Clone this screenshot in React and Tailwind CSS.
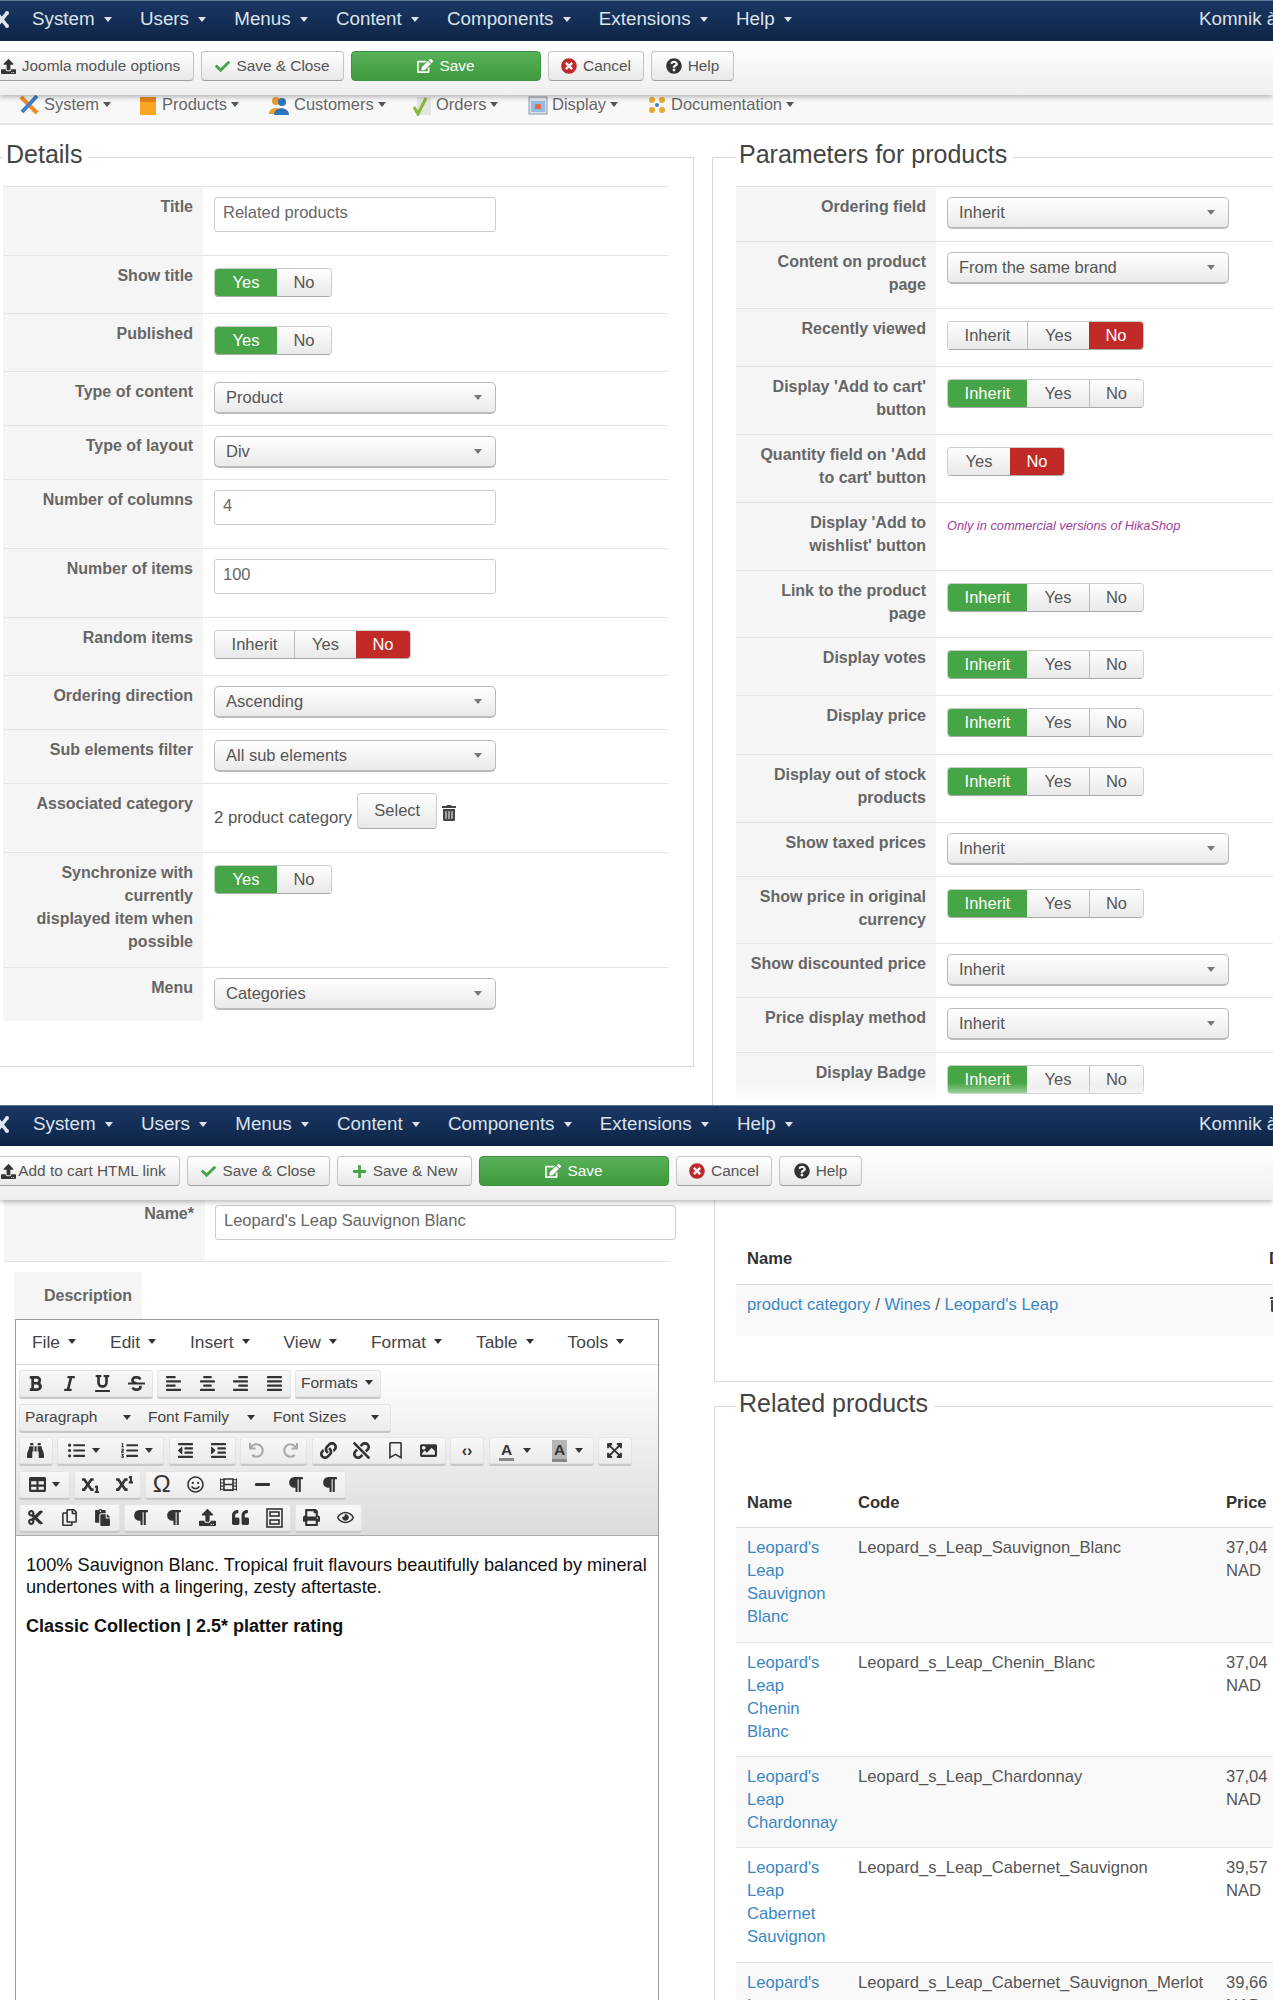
import {
  FaCheck, FaEdit, FaTimesCircle, FaQuestionCircle, FaUpload, FaPlus, FaTrashAlt,
  FaBold, FaItalic, FaUnderline, FaStrikethrough, FaAlignLeft, FaAlignCenter, FaAlignRight, FaAlignJustify,
  FaBinoculars, FaListUl, FaListOl, FaOutdent, FaIndent, FaUndo, FaRedo, FaLink, FaUnlink, FaRegBookmark, FaImage,
  FaExpandArrowsAlt, FaTable, FaSubscript, FaSuperscript, FaRegSmile, FaFilm, FaMinus, FaParagraph,
  FaCut, FaRegCopy, FaPaste, FaQuoteLeft, FaPrint, FaRegEye,
} from "react-icons/fa";

const Caret = ({ tone = "border-t-[#333]" }) => (
  <span className={`inline-block w-0 h-0 border-x-[4px] border-x-transparent border-t-[5px] ${tone}`} />
);

const JoomlaLogo = () => (
  <svg width="10" height="20" viewBox="0 0 10 20" className="shrink-0">
    <path d="M-4 2 L7 16 M7 3 L-4 17" stroke="#dfe6ee" strokeWidth="3.5" fill="none" />
    <circle cx="7" cy="3" r="2" fill="#dfe6ee" />
    <circle cx="7" cy="16" r="2" fill="#dfe6ee" />
  </svg>
);

const menu = ["System", "Users", "Menus", "Content", "Components", "Extensions", "Help"];

// top dark admin bar
const Navbar = ({ left }) => (
  <div className="h-[41px] pb-[3px] flex items-center bg-gradient-to-b from-[#1a3763] to-[#0e2548] border-t border-[#5f7a99] text-[#dce3ec] text-[18.8px]">
    <div className="w-[10px] shrink-0"><JoomlaLogo /></div>
    <div className={`flex gap-[28.3px] ${left}`}>
      {menu.map((m) => (
        <span key={m} className="flex items-center gap-[9px]">
          {m}
          <Caret tone="border-t-[#dce3ec]" />
        </span>
      ))}
    </div>
    <span className="ml-auto whitespace-nowrap w-[74px] shrink-0 overflow-hidden">Komnik à</span>
  </div>
);

const ToolBtn = ({ w, icon, children, green }) => (
  <div
    className={`${w} h-[30px] shrink-0 flex items-center justify-center gap-[6px] rounded-[4px] text-[15.4px] whitespace-nowrap border ${
      green
        ? "bg-gradient-to-b from-[#58b158] to-[#3f9a3f] border-[#3e913e] text-white"
        : "bg-gradient-to-b from-white to-[#e8e8e8] border-[#c4c4c4] border-b-[#9f9f9f] text-[#555]"
    }`}
  >
    {icon}
    {children}
  </div>
);

const Toolbar = ({ children }) => (
  <div className="relative z-10 h-[54px] flex items-center gap-[7px] pb-[4px] bg-gradient-to-b from-white to-[#efefef] shadow-[0_2px_5px_rgba(0,0,0,0.28)]">
    {children}
  </div>
);

const saveIcon = <FaEdit size={16} />;
const checkIcon = <FaCheck size={15} className="text-[#46a546]" />;
const cancelIcon = <FaTimesCircle size={16} className="text-[#c0292b]" />;
const helpIcon = <FaQuestionCircle size={16} className="text-[#333]" />;

// little coloured hikashop menu icons
const SubIcons = {
  System: (
    <svg width="22" height="22" viewBox="0 0 22 22">
      <path d="M3 3 L19 19" stroke="#f08a24" strokeWidth="4" />
      <path d="M19 2 L4 18" stroke="#3f7fc4" strokeWidth="4" />
    </svg>
  ),
  Products: (
    <svg width="20" height="22" viewBox="0 0 20 22">
      <rect x="2" y="3" width="16" height="18" fill="#f9a521" />
      <rect x="2" y="3" width="16" height="5" fill="#e2861a" />
    </svg>
  ),
  Customers: (
    <svg width="22" height="22" viewBox="0 0 22 22">
      <circle cx="8" cy="7" r="4" fill="#ef9b2d" />
      <path d="M1 20 C1 12 14 12 14 20 Z" fill="#ef9b2d" />
      <circle cx="14" cy="8" r="4" fill="#2f73b8" />
      <path d="M6 21 C6 12 21 12 21 21 Z" fill="#2f73b8" />
    </svg>
  ),
  Orders: (
    <svg width="20" height="22" viewBox="0 0 20 22">
      <rect x="5" y="3" width="14" height="18" fill="#e2e4e0" />
      <path d="M2 13 L6 20 L14 4" stroke="#8ab83a" strokeWidth="3" fill="none" />
    </svg>
  ),
  Display: (
    <svg width="20" height="20" viewBox="0 0 20 20">
      <rect x="1" y="2" width="18" height="17" fill="#dfe3e8" stroke="#8f98a3" />
      <rect x="3" y="6" width="14" height="11" fill="#8fbde6" />
      <rect x="7" y="9" width="6" height="5" fill="#e56b4a" />
    </svg>
  ),
  Documentation: (
    <svg width="20" height="20" viewBox="0 0 20 20">
      <circle cx="5" cy="5" r="3" fill="#e8a92e" />
      <circle cx="15" cy="5" r="3" fill="#e8a92e" />
      <circle cx="5" cy="15" r="3" fill="#e8a92e" />
      <circle cx="15" cy="15" r="3" fill="#e8a92e" />
      <circle cx="10" cy="10" r="2" fill="#3f7fc4" />
    </svg>
  ),
};

const subItems = [
  { name: "System", w: "w-[120px]" },
  { name: "Products", w: "w-[130px]" },
  { name: "Customers", w: "w-[144px]" },
  { name: "Orders", w: "w-[116px]" },
  { name: "Display", w: "w-[119px]" },
  { name: "Documentation", w: "w-[200px]" },
];

const SubMenu = () => (
  <div className="h-[30px] pl-[18px] pb-[9px] flex items-center bg-[#f8f8f8] border-b-2 border-[#e2e2e2] text-[16.5px] text-[#666]">
    {subItems.map((s) => (
      <span key={s.name} className={`${s.w} flex items-center gap-[4px] shrink-0`}>
        {SubIcons[s.name]}
        {s.name}
        <Caret tone="border-t-[#555]" />
      </span>
    ))}
  </div>
);

const TextInput = ({ value, w = "w-[282px]" }) => (
  <input
    readOnly
    defaultValue={value}
    className={`${w} h-[35px] px-[8px] pb-[4px] bg-white border border-[#ccc] rounded-[3px] text-[16.5px] text-[#666] outline-none`}
  />
);

const Select = ({ value, w = "w-[282px]" }) => (
  <div className={`${w} h-[32px] pl-[11px] pr-[13px] flex items-center justify-between rounded-[5px] border border-[#bbb] border-b-2 bg-gradient-to-b from-white to-[#eaeaea] text-[16.5px] text-[#555]`}>
    {value}
    <Caret tone="border-t-[#777]" />
  </div>
);

const seg = {
  Inherit: "w-[79px]",
  Yes: "w-[62px]",
  No: "w-[54px]",
};

// Yes/No radio group, active option coloured
const Toggle = ({ items, active }) => (
  <div className="mt-[2px] inline-flex h-[29px] text-[16.5px] rounded-[4px] border border-[#ccc] border-b-[#aaa] overflow-hidden">
    {items.map((o, i) => {
      const on = o === active;
      const tone = on
        ? o === "No"
          ? "bg-[#c12a27] text-white"
          : "bg-[#46a546] text-white"
        : "bg-gradient-to-b from-white to-[#e8e8e8] text-[#555]";
      const edge = i > 0 && !on && items[i - 1] !== active ? "border-l border-[#bbb]" : "";
      return (
        <span key={o} className={`${seg[o]} -my-px flex items-center justify-center ${tone} ${edge}`}>
          {o}
        </span>
      );
    })}
  </div>
);

const yn = ["Yes", "No"];
const iyn = ["Inherit", "Yes", "No"];

const Row = ({ label, h, children }) => (
  <div className={`${h} flex border-t border-[#e4e4e4]`}>
    <div className="w-[200px] shrink-0 bg-[#f5f5f5] pl-[14px] pt-[8px] pr-[10px] text-right font-bold text-[16px] leading-[23px] text-[#666]">
      {label}
    </div>
    <div className="pl-[11px] pt-[10px]">{children}</div>
  </div>
);

const leftRows = [
  { label: "Title", h: "h-[69px]", c: <TextInput value="Related products" /> },
  { label: "Show title", h: "h-[58px]", c: <Toggle items={yn} active="Yes" /> },
  { label: "Published", h: "h-[58px]", c: <Toggle items={yn} active="Yes" /> },
  { label: "Type of content", h: "h-[54px]", c: <Select value="Product" /> },
  { label: "Type of layout", h: "h-[54px]", c: <Select value="Div" /> },
  { label: "Number of columns", h: "h-[69px]", c: <TextInput value="4" /> },
  { label: "Number of items", h: "h-[69px]", c: <TextInput value="100" /> },
  { label: "Random items", h: "h-[58px]", c: <Toggle items={iyn} active="No" /> },
  { label: "Ordering direction", h: "h-[54px]", c: <Select value="Ascending" /> },
  { label: "Sub elements filter", h: "h-[54px]", c: <Select value="All sub elements" /> },
  {
    label: "Associated category",
    h: "h-[69px]",
    c: (
      <div className="flex items-start text-[16.7px] text-[#555]">
        <span className="mt-[11px] whitespace-nowrap">2 product category</span>
        <div className="ml-[5px] -mt-px w-[80px] h-[36px] flex items-center justify-center pb-[2px] rounded-[4px] border border-[#ccc] border-b-[#aaa] bg-gradient-to-b from-white to-[#e8e8e8] text-[16.5px]">
          Select
        </div>
        <FaTrashAlt size={16} className="ml-[4px] mt-[11px] text-[#444]" />
      </div>
    ),
  },
  {
    label: <>Synchronize with<br />currently<br />displayed item when<br />possible</>,
    key: "sync",
    h: "h-[115px]",
    c: <Toggle items={yn} active="Yes" />,
  },
  { label: "Menu", h: "h-[54px]", c: <Select value="Categories" /> },
];

const rightRows = [
  { label: "Ordering field", h: "h-[55px]", c: <Select value="Inherit" /> },
  { label: "Content on product page", h: "h-[67px]", c: <Select value="From the same brand" /> },
  { label: "Recently viewed", h: "h-[58px]", c: <Toggle items={iyn} active="No" /> },
  { label: "Display 'Add to cart' button", h: "h-[68px]", c: <Toggle items={iyn} active="Inherit" /> },
  { label: "Quantity field on 'Add to cart' button", h: "h-[68px]", c: <Toggle items={yn} active="No" /> },
  {
    label: "Display 'Add to wishlist' button",
    h: "h-[68px]",
    c: <span className="block pt-[1px] italic text-[12.8px] leading-[23px] text-[#a1409b] whitespace-nowrap">Only in commercial versions of HikaShop</span>,
  },
  { label: "Link to the product page", h: "h-[67px]", c: <Toggle items={iyn} active="Inherit" /> },
  { label: "Display votes", h: "h-[58px]", c: <Toggle items={iyn} active="Inherit" /> },
  { label: "Display price", h: "h-[59px]", c: <Toggle items={iyn} active="Inherit" /> },
  { label: "Display out of stock products", h: "h-[68px]", c: <Toggle items={iyn} active="Inherit" /> },
  { label: "Show taxed prices", h: "h-[54px]", c: <Select value="Inherit" /> },
  { label: "Show price in original currency", h: "h-[67px]", c: <Toggle items={iyn} active="Inherit" /> },
  { label: "Show discounted price", h: "h-[54px]", c: <Select value="Inherit" /> },
  { label: "Price display method", h: "h-[55px]", c: <Select value="Inherit" /> },
  { label: "Display Badge", h: "h-[60px]", c: <Toggle items={iyn} active="Inherit" /> },
];

const Legend = ({ children }) => (
  <legend className="pl-[3px] pr-[6px] pb-[6px] text-[25px] leading-[30px] text-[#444] whitespace-nowrap">{children}</legend>
);

// ---- tinymce bits ----
const IconBtn = ({ children, dim }) => (
  <span className={`w-[33.5px] h-full flex items-center justify-center ${dim ? "text-[#aaa]" : "text-[#333]"}`}>{children}</span>
);

const Group = ({ children }) => (
  <div className="h-[29px] flex items-center rounded-[3px] border-b-2 border-b-[#c8c8c8] shadow-[inset_0_0_0_1px_#e4e4e4] bg-gradient-to-b from-[#f8f8f8] to-[#ebebeb]">
    {children}
  </div>
);

const Tools = ({ children, gap = "gap-[4px]" }) => <div className={`flex h-[29px] ${gap}`}>{children}</div>;

const TemplateIcon = () => (
  <svg width="17" height="20" viewBox="0 0 17 20" fill="none" stroke="#333" strokeWidth="1.6">
    <rect x="1" y="1" width="15" height="18" />
    <rect x="4" y="4" width="9" height="4" />
    <rect x="4" y="12" width="9" height="4" />
  </svg>
);

const editorMenu = ["File", "Edit", "Insert", "View", "Format", "Table", "Tools"];
const sz = 17;

const Editor = () => (
  <div className="ml-[15px] w-[644px] min-h-[700px] border border-[#9a9a9a] bg-white">
    <div className="h-[45px] pl-[16px] flex items-center gap-[34px] border-b border-[#d8d8d8] text-[17.4px] text-[#444]">
      {editorMenu.map((m) => (
        <span key={m} className="flex items-center gap-[8px]">
          {m}
          <Caret />
        </span>
      ))}
    </div>
    <div className="h-[171px] pl-[3px] pt-[5px] flex flex-col gap-[4.5px] bg-gradient-to-b from-white to-[#dcdcdc] border-b border-[#aaa] text-[15.5px] text-[#444]">
      <Tools>
        <Group>
          <IconBtn><FaBold size={sz} /></IconBtn>
          <IconBtn><FaItalic size={sz} /></IconBtn>
          <IconBtn><FaUnderline size={sz} /></IconBtn>
          <IconBtn><FaStrikethrough size={sz} /></IconBtn>
        </Group>
        <Group>
          <IconBtn><FaAlignLeft size={sz} /></IconBtn>
          <IconBtn><FaAlignCenter size={sz} /></IconBtn>
          <IconBtn><FaAlignRight size={sz} /></IconBtn>
          <IconBtn><FaAlignJustify size={sz} /></IconBtn>
        </Group>
        <Group>
          <span className="w-[86px] pl-[6px] pb-[2px] flex items-center gap-[7px]">Formats <Caret /></span>
        </Group>
      </Tools>
      <Tools>
        <Group>
          <span className="w-[124px] pl-[6px] pr-[12px] flex items-center justify-between">Paragraph <Caret /></span>
          <span className="w-[124px] pl-[5px] pr-[12px] flex items-center justify-between">Font Family <Caret /></span>
          <span className="w-[124px] pl-[6px] pr-[12px] flex items-center justify-between">Font Sizes <Caret /></span>
        </Group>
      </Tools>
      <Tools gap="gap-[4.5px]">
        <Group><IconBtn><FaBinoculars size={sz} /></IconBtn></Group>
        <Group>
          <span className="w-[53.5px] flex items-center justify-center gap-[7px] text-[#333]"><FaListUl size={sz} /><Caret /></span>
          <span className="w-[53.5px] flex items-center justify-center gap-[7px] text-[#333]"><FaListOl size={sz} /><Caret /></span>
        </Group>
        <Group>
          <IconBtn><FaOutdent size={sz} /></IconBtn>
          <IconBtn><FaIndent size={sz} /></IconBtn>
        </Group>
        <Group>
          <IconBtn dim><FaUndo size={15} /></IconBtn>
          <IconBtn dim><FaRedo size={15} /></IconBtn>
        </Group>
        <Group>
          <IconBtn><FaLink size={sz} /></IconBtn>
          <IconBtn><FaUnlink size={sz} /></IconBtn>
          <IconBtn><FaRegBookmark size={sz} /></IconBtn>
          <IconBtn><FaImage size={sz} /></IconBtn>
        </Group>
        <Group>
          <span className="w-[34px] text-center text-[16px] font-bold text-[#333]">‹›</span>
        </Group>
        <Group>
          <span className="w-[53px] flex items-center justify-center gap-[9px]">
            <span className="font-bold border-b-[3px] border-[#888] leading-[17px] px-[2px] text-[#333]">A</span>
            <Caret />
          </span>
          <span className="w-[52px] flex items-center justify-center gap-[8px]">
            <span className="font-bold bg-[#b5b5b5] border-b-[3px] border-[#888] leading-[19px] px-[2px] text-[#333]">A</span>
            <Caret />
          </span>
        </Group>
        <Group><IconBtn><FaExpandArrowsAlt size={sz} /></IconBtn></Group>
      </Tools>
      <Tools>
        <Group>
          <span className="w-[51px] flex items-center justify-center gap-[6px] text-[#333]"><FaTable size={sz} /><Caret /></span>
        </Group>
        <Group>
          <IconBtn><FaSubscript size={sz} /></IconBtn>
          <IconBtn><FaSuperscript size={sz} /></IconBtn>
        </Group>
        <Group>
          <IconBtn><span className="text-[24px] text-[#333]">Ω</span></IconBtn>
          <IconBtn><FaRegSmile size={sz} /></IconBtn>
          <IconBtn><FaFilm size={sz} /></IconBtn>
          <IconBtn><FaMinus size={sz} /></IconBtn>
          <IconBtn><FaParagraph size={sz} /></IconBtn>
          <IconBtn><FaParagraph size={sz} /></IconBtn>
        </Group>
      </Tools>
      <Tools>
        <Group>
          <IconBtn><FaCut size={sz} /></IconBtn>
          <IconBtn><FaRegCopy size={sz} /></IconBtn>
          <IconBtn><FaPaste size={sz} /></IconBtn>
        </Group>
        <Group>
          <IconBtn><FaParagraph size={sz} /></IconBtn>
          <IconBtn><FaParagraph size={sz} /></IconBtn>
          <IconBtn><FaUpload size={sz} /></IconBtn>
          <IconBtn><FaQuoteLeft size={sz} /></IconBtn>
          <IconBtn><TemplateIcon /></IconBtn>
        </Group>
        <Group>
          <IconBtn><FaPrint size={sz} /></IconBtn>
          <IconBtn><FaRegEye size={sz} /></IconBtn>
        </Group>
      </Tools>
    </div>
    <div className="pl-[10px] pr-[8px] pt-[18px] text-[18.2px] leading-[22px] text-[#111]">
      <p>100% Sauvignon Blanc. Tropical fruit flavours beautifully balanced by mineral undertones with a lingering, zesty aftertaste.</p>
      <p className="mt-[17px] font-bold text-[18px]">Classic Collection | 2.5* platter rating</p>
    </div>
  </div>
);

const products = [
  { name: "Leopard's Leap Sauvignon Blanc", code: "Leopard_s_Leap_Sauvignon_Blanc", price: "37,04 NAD", h: "h-[115px]", bg: "bg-[#f9f9f9]" },
  { name: "Leopard's Leap Chenin Blanc", code: "Leopard_s_Leap_Chenin_Blanc", price: "37,04 NAD", h: "h-[114px]", bg: "" },
  { name: "Leopard's Leap Chardonnay", code: "Leopard_s_Leap_Chardonnay", price: "37,04 NAD", h: "h-[91px]", bg: "bg-[#f9f9f9]" },
  { name: "Leopard's Leap Cabernet Sauvignon", code: "Leopard_s_Leap_Cabernet_Sauvignon", price: "39,57 NAD", h: "h-[115px]", bg: "" },
  { name: "Leopard's Leap Cabernet Sauvignon Merlot", code: "Leopard_s_Leap_Cabernet_Sauvignon_Merlot", price: "39,66 NAD", h: "h-[115px]", bg: "bg-[#f9f9f9]" },
];

export default function App() {
  return (
    <div className="w-[1273px] h-[2000px] overflow-hidden bg-white font-['Liberation_Sans',Arial,sans-serif]">
      {/* first screen: module options */}
      <div className="relative h-[1105px] overflow-hidden">
        <Navbar left="ml-[22px]" />
        <Toolbar>
          <ToolBtn w="w-[199px] -ml-[5px] pr-[8px]" icon={<FaUpload size={15} className="text-[#333]" />}>Joomla module options</ToolBtn>
          <ToolBtn w="w-[143px]" icon={checkIcon}>Save &amp; Close</ToolBtn>
          <ToolBtn w="w-[190px]" icon={saveIcon} green>Save</ToolBtn>
          <ToolBtn w="w-[96px]" icon={cancelIcon}>Cancel</ToolBtn>
          <ToolBtn w="w-[83px]" icon={helpIcon}>Help</ToolBtn>
        </Toolbar>
        <SubMenu />
        <div className="flex pt-[14px]">
          <fieldset className="-ml-[10px] w-[704px] shrink-0 h-[928px] border border-[#d9d9d9] pl-[12px] pr-[25px] pt-[11px]">
            <Legend>Details</Legend>
            {leftRows.map((r) => (
              <Row key={r.key || r.label} label={r.label} h={r.h}>{r.c}</Row>
            ))}
          </fieldset>
          <fieldset className="ml-[18px] w-[700px] shrink-0 border border-[#d9d9d9] pl-[23px] pt-[11px]">
            <Legend>Parameters for products</Legend>
            {rightRows.map((r) => (
              <Row key={r.label} label={r.label} h={r.h}>{r.c}</Row>
            ))}
          </fieldset>
        </div>
        <div className="absolute bottom-0 left-[720px] right-0 h-[22px] bg-gradient-to-t from-white to-transparent" />
      </div>

      {/* second screen: product edit */}
      <div className="h-[895px] overflow-hidden">
        <Navbar left="ml-[23px]" />
        <Toolbar>
          <ToolBtn w="w-[185px] -ml-[5px] pr-[8px] !gap-[2px]" icon={<FaUpload size={15} className="text-[#333]" />}>Add to cart HTML link</ToolBtn>
          <ToolBtn w="w-[143px]" icon={checkIcon}>Save &amp; Close</ToolBtn>
          <ToolBtn w="w-[135px]" icon={<FaPlus size={15} className="text-[#46a546]" />}>Save &amp; New</ToolBtn>
          <ToolBtn w="w-[190px]" icon={saveIcon} green>Save</ToolBtn>
          <ToolBtn w="w-[96px]" icon={cancelIcon}>Cancel</ToolBtn>
          <ToolBtn w="w-[83px]" icon={helpIcon}>Help</ToolBtn>
        </Toolbar>
        <div className="flex">
          <div className="w-[714px] shrink-0">
            <div className="ml-[4px] w-[666px] h-[62px] flex border-b border-[#e4e4e4]">
              <div className="w-[201px] shrink-0 bg-[#f5f5f5] pt-[2px] pr-[11px] text-right font-bold text-[16px] leading-[23px] text-[#666]">Name*</div>
              <div className="pl-[10px] pt-[5px]">
                <TextInput value="Leopard's Leap Sauvignon Blanc" w="w-[461px]" />
              </div>
            </div>
            <div className="ml-[14px] mt-[10px] w-[128px] h-[47px] flex items-center justify-center pl-[20px] bg-[#f5f5f5] font-bold text-[16px] text-[#666]">
              Description
            </div>
            <Editor />
          </div>
          <div className="w-[620px] shrink-0">
            <div className="h-[182px] pt-[36px] pl-[21px] border-l border-b border-[#d9d9d9]">
              <table className="w-[560px] table-fixed text-[16.6px] text-[#555]">
                <thead>
                  <tr className="h-[48px] border-b border-[#ddd]">
                    <th className="w-[522px] pl-[11px] text-left font-bold text-[#333]">Name</th>
                    <th className="pl-[11px] text-left font-bold text-[#333]">Delete</th>
                  </tr>
                </thead>
                <tbody>
                  <tr className="h-[52px] bg-[#f9f9f9]">
                    <td className="pl-[11px] pt-[8px] align-top leading-[23px] text-[#3a87c5]">
                      product category <span className="text-[#555]">/</span> Wines <span className="text-[#555]">/</span> Leopard's Leap
                    </td>
                    <td className="pl-[11px] pt-[11px] align-top"><FaTrashAlt size={16} className="text-[#444]" /></td>
                  </tr>
                </tbody>
              </table>
            </div>
            <fieldset className="mt-[6px] border border-[#d9d9d9] pl-[21px]">
              <Legend>Related products</Legend>
              <table className="mt-[55px] w-[548px] table-fixed text-[16.6px] leading-[23px] text-[#555]">
                <thead>
                  <tr className="h-[48px] border-b border-[#ddd] text-[#333]">
                    <th className="w-[111px] pl-[11px] text-left font-bold">Name</th>
                    <th className="w-[368px] pl-[11px] text-left font-bold">Code</th>
                    <th className="pl-[11px] text-left font-bold">Price</th>
                  </tr>
                </thead>
                <tbody>
                  {products.map((p) => (
                    <tr key={p.code} className={`${p.h} ${p.bg} border-b border-[#e4e4e4]`}>
                      <td className="pl-[11px] pr-[19px] pt-[8px] align-top text-[#3a87c5]">{p.name}</td>
                      <td className="pl-[11px] pt-[8px] align-top whitespace-nowrap">{p.code}</td>
                      <td className="pl-[11px] pt-[8px] pr-[11px] align-top">{p.price}</td>
                    </tr>
                  ))}
                </tbody>
              </table>
            </fieldset>
          </div>
        </div>
      </div>
    </div>
  );
}
